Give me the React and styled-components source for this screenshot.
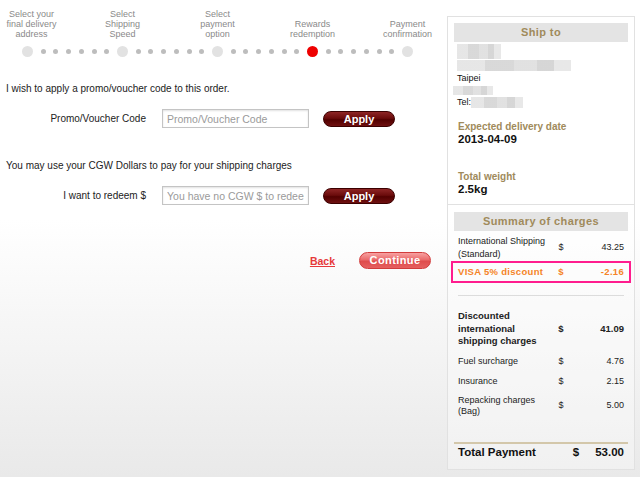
import styled, { createGlobalStyle } from "styled-components"

const steps = [
    ["Select your", "final delivery", "address"],
    ["Select", "Shipping", "Speed"],
    ["Select", "payment", "option"],
    ["Rewards", "redemption"],
    ["Payment", "confirmation"],
]

const CURRENT = 3

function Stepper() {
    return (
        <StepRow>
            {steps.map((lines, i) => (
                <StepGroup key={i}>
                    <Step>
                        <StepLabel first={i === 0}>
                            {lines.map(l => <span key={l}>{l}</span>)}
                        </StepLabel>
                        <BigDot active={i === CURRENT} />
                    </Step>
                    {i < steps.length - 1 && (
                        <Track>
                            {[0, 1, 2, 3, 4, 5].map(d => <SmallDot key={d} />)}
                        </Track>
                    )}
                </StepGroup>
            ))}
        </StepRow>
    )
}

function Row({ label, amount, bold, lines, tight, compact }) {
    return (
        <ChargeRow bold={bold} tight={tight} compact={compact}>
            <ChargeLabel>{lines ? lines.map(l => <span key={l}>{l}</span>) : label}</ChargeLabel>
            <Dollar>$</Dollar>
            <Amount>{amount}</Amount>
        </ChargeRow>
    )
}

export default function App() {
    return (
        <>
            <GlobalStyle />
            <Page>
                <Main>
                    <Stepper />

                    <Intro>I wish to apply a promo/voucher code to this order.</Intro>
                    <FormRow>
                        <FieldLabel>Promo/Voucher Code</FieldLabel>
                        <Input placeholder="Promo/Voucher Code" />
                        <ApplyButton>Apply</ApplyButton>
                    </FormRow>

                    <Intro second>You may use your CGW Dollars to pay for your shipping charges</Intro>
                    <FormRow>
                        <FieldLabel>I want to redeem $</FieldLabel>
                        <Input placeholder="You have no CGW $ to redeem" />
                        <ApplyButton>Apply</ApplyButton>
                    </FormRow>

                    <Actions>
                        <BackLink href="#">Back</BackLink>
                        <ContinueButton>Continue</ContinueButton>
                    </Actions>
                </Main>

                <Sidebar>
                    <Panel>
                        <PanelHeader>Ship to</PanelHeader>
                        <Address>
                            <Redacted w={44} h={15} />
                            <Redacted w={114} h={11} />
                            <AddressLine>Taipei</AddressLine>
                            <Redacted w={40} h={9} shift={-4} />
                            <AddressLine>Tel:<Redacted w={52} h={11} inline /></AddressLine>
                        </Address>
                        <InfoLabel>Expected delivery date</InfoLabel>
                        <InfoValue>2013-04-09</InfoValue>
                        <InfoLabel spaced>Total weight</InfoLabel>
                        <InfoValue>2.5kg</InfoValue>
                    </Panel>

                    <Panel summary>
                        <PanelHeader>Summary of charges</PanelHeader>
                        <Charges>
                            <Row lines={["International Shipping", "(Standard)"]} amount="43.25" />
                            <Highlight>
                                <Row label="VISA 5% discount" amount="-2.16" bold tight />
                            </Highlight>
                            <Divider />
                            <Row lines={["Discounted", "international", "shipping charges"]} amount="41.09" bold />
                            <Row label="Fuel surcharge" amount="4.76" />
                            <Row label="Insurance" amount="2.15" />
                            <Row lines={["Repacking charges", "(Bag)"]} amount="5.00" compact />
                        </Charges>
                        <TotalRow>
                            <span>Total Payment</span>
                            <TotalDollar>$</TotalDollar>
                            <TotalAmount>53.00</TotalAmount>
                        </TotalRow>
                    </Panel>
                </Sidebar>
            </Page>
        </>
    )
}

const GlobalStyle = createGlobalStyle`
    html, body {
        margin: 0;
        height: 100%;
    }
    body {
        background: linear-gradient(to bottom, #ffffff 0, #ffffff 220px, #e9e9e9 477px);
        font-family: "Liberation Sans", Arial, sans-serif;
        color: #222;
    }
    #root {
        min-height: 100%;
    }
`;

const Page = styled.div`
    display: flex;
    width: 640px;
    min-height: 477px;
`;

const Main = styled.div`
    width: 447px;
    padding-left: 6px;
    box-sizing: border-box;
`;

const StepRow = styled.div`
    display: flex;
    margin-left: 16px;
    padding-top: 9px;
`;

const StepGroup = styled.div`
    display: flex;
    align-items: flex-end;
`;

const Step = styled.div`
    width: 11px;
    display: flex;
    flex-direction: column;
    align-items: center;
`;

const StepLabel = styled.div`
    width: 90px;
    height: 30px;
    display: flex;
    flex-direction: column;
    justify-content: flex-end;
    align-items: center;
    font-size: 9px;
    line-height: 10px;
    color: #8a8a8a;
    margin-bottom: 7px;
    margin-left: ${p => p.first ? '8px' : '0'};
    white-space: nowrap;
`;

const BigDot = styled.div`
    width: 11px;
    height: 11px;
    border-radius: 50%;
    background: ${p => p.active ? '#ee0000' : '#e2e2e2'};
`;

const Track = styled.div`
    width: 84px;
    height: 11px;
    display: flex;
    justify-content: space-evenly;
    align-items: center;
`;

const SmallDot = styled.div`
    width: 5px;
    height: 5px;
    border-radius: 50%;
    background: #bdbdbd;
`;

const Intro = styled.p`
    margin: ${p => p.second ? '31px' : '25px'} 0 0;
    font-size: 10px;
    line-height: 13px;
    color: #222;
`;

const FormRow = styled.div`
    display: grid;
    grid-template-columns: 140px 149px 72px;
    column-gap: 14px;
    align-items: center;
    margin-top: 14px;
`;

const FieldLabel = styled.label`
    text-align: right;
    font-size: 10px;
    color: #222;
`;

const Input = styled.input`
    height: 19px;
    box-sizing: border-box;
    margin-left: 2px;
    border: 1px solid #c4c4c4;
    box-shadow: inset 0 1px 2px rgba(0, 0, 0, 0.12);
    padding: 0 4px;
    font-family: "Liberation Sans", sans-serif;
    font-size: 10.5px;
    color: #333;
    outline: none;
    &::placeholder {
        color: #9a9a9a;
    }
`;

const ApplyButton = styled.button`
    height: 16px;
    width: 72px;
    border-radius: 8px;
    border: 1px solid #3b0000;
    background: linear-gradient(to bottom, #8e2525 0%, #6a0b0b 45%, #520000 55%, #6e1010 100%);
    color: #fff;
    font-family: "Liberation Sans", sans-serif;
    font-weight: bold;
    font-size: 11px;
    padding: 0;
    line-height: 14px;
`;

const Actions = styled.div`
    display: flex;
    justify-content: flex-end;
    align-items: center;
    gap: 24px;
    padding-right: 16px;
    margin-top: 47px;
`;

const BackLink = styled.a`
    color: #e6393a;
    font-size: 10.5px;
    font-weight: bold;
    text-decoration: underline;
`;

const ContinueButton = styled.button`
    height: 17px;
    width: 72px;
    border-radius: 9px;
    border: 1px solid #d23c3c;
    background: linear-gradient(to bottom, #f7a1a1 0%, #ea6b6b 45%, #df4c4c 55%, #e56060 100%);
    color: #fff;
    font-family: "Liberation Sans", sans-serif;
    font-weight: bold;
    font-size: 11px;
    letter-spacing: 0.4px;
    padding: 0;
    line-height: 15px;
`;

const Sidebar = styled.div`
    width: 188px;
    margin-top: 16px;
    margin-bottom: 9px;
    display: flex;
    flex-direction: column;
`;

const Panel = styled.div`
    border: 1px solid #e1e1e1;
    border-top: ${p => p.summary ? 'none' : '1px solid #e1e1e1'};
    padding: 6px 6px 0;
    background: rgba(255, 255, 255, 0.35);
    ${p => p.summary ? 'flex: 1; padding-top: 7px; padding-bottom: 10px;' : 'height: 189px; box-sizing: border-box;'}
`;

const PanelHeader = styled.div`
    background: #e4e4e4;
    height: 19px;
    line-height: 19px;
    text-align: center;
    color: #a08a5b;
    font-weight: bold;
    font-size: 11px;
    letter-spacing: 0.4px;
`;

const Address = styled.div`
    display: flex;
    flex-direction: column;
    align-items: flex-start;
    padding-left: 3px;
    margin-top: 1px;
`;

const Redacted = styled.span`
    display: ${p => p.inline ? 'inline-block' : 'block'};
    width: ${p => p.w}px;
    height: ${p => p.h}px;
    margin-left: ${p => p.shift || 0}px;
    margin-top: ${p => p.inline ? 0 : 1}px;
    vertical-align: middle;
    background:
        linear-gradient(to right, #e2e2e2 0 25%, #d2d2d2 25% 50%, #dcdcdc 50% 70%, #cfcfcf 70% 85%, #e4e4e4 85%);
    opacity: 0.85;
`;

const AddressLine = styled.div`
    font-size: 9px;
    line-height: 11px;
    margin: 2px 0 1px;
    color: #111;
    display: flex;
    align-items: center;
`;

const InfoLabel = styled.div`
    margin: ${p => p.spaced ? '25px' : '12px'} 0 0 4px;
    color: #a08a5b;
    font-weight: bold;
    font-size: 10px;
    line-height: 12px;
`;

const InfoValue = styled.div`
    margin: 0 0 0 4px;
    font-weight: bold;
    font-size: 11.5px;
    line-height: 13px;
    color: #111;
`;

const Charges = styled.div`
    padding: 0 4px;
    display: flex;
    flex-direction: column;
`;

const ChargeRow = styled.div`
    display: grid;
    grid-template-columns: 90px 26px 50px;
    align-items: center;
    font-size: ${p => p.bold ? '9.5px' : '9px'};
    font-weight: ${p => p.bold ? 'bold' : 'normal'};
    line-height: ${p => p.bold ? '12.5px' : p.compact ? '11px' : '13px'};
    padding: ${p => p.tight ? '2.5px' : '3.5px'} 0;
    color: inherit;
`;

const ChargeLabel = styled.div`
    display: flex;
    flex-direction: column;
    white-space: nowrap;
`;

const Dollar = styled.span`
    text-align: center;
`;

const Amount = styled.span`
    text-align: right;
`;

const Highlight = styled.div`
    margin: -3px -7px 0;
    padding: 0 5px;
    border: 2px solid #ff1d8e;
    color: #f58427;
    letter-spacing: 0.3px;
`;

const Divider = styled.div`
    height: 1px;
    background: #dcdcdc;
    margin: 12px 0 11px;
`;

const TotalRow = styled.div`
    display: grid;
    grid-template-columns: 106px 24px 36px;
    align-items: center;
    border-top: 2px solid #d3c7aa;
    margin-top: 22px;
    padding: 1px 4px 0;
    font-weight: bold;
    font-size: 11.5px;
    line-height: 14px;
    color: #111;
`;

const TotalDollar = styled.span`
    text-align: center;
`;

const TotalAmount = styled.span`
    text-align: right;
`;
